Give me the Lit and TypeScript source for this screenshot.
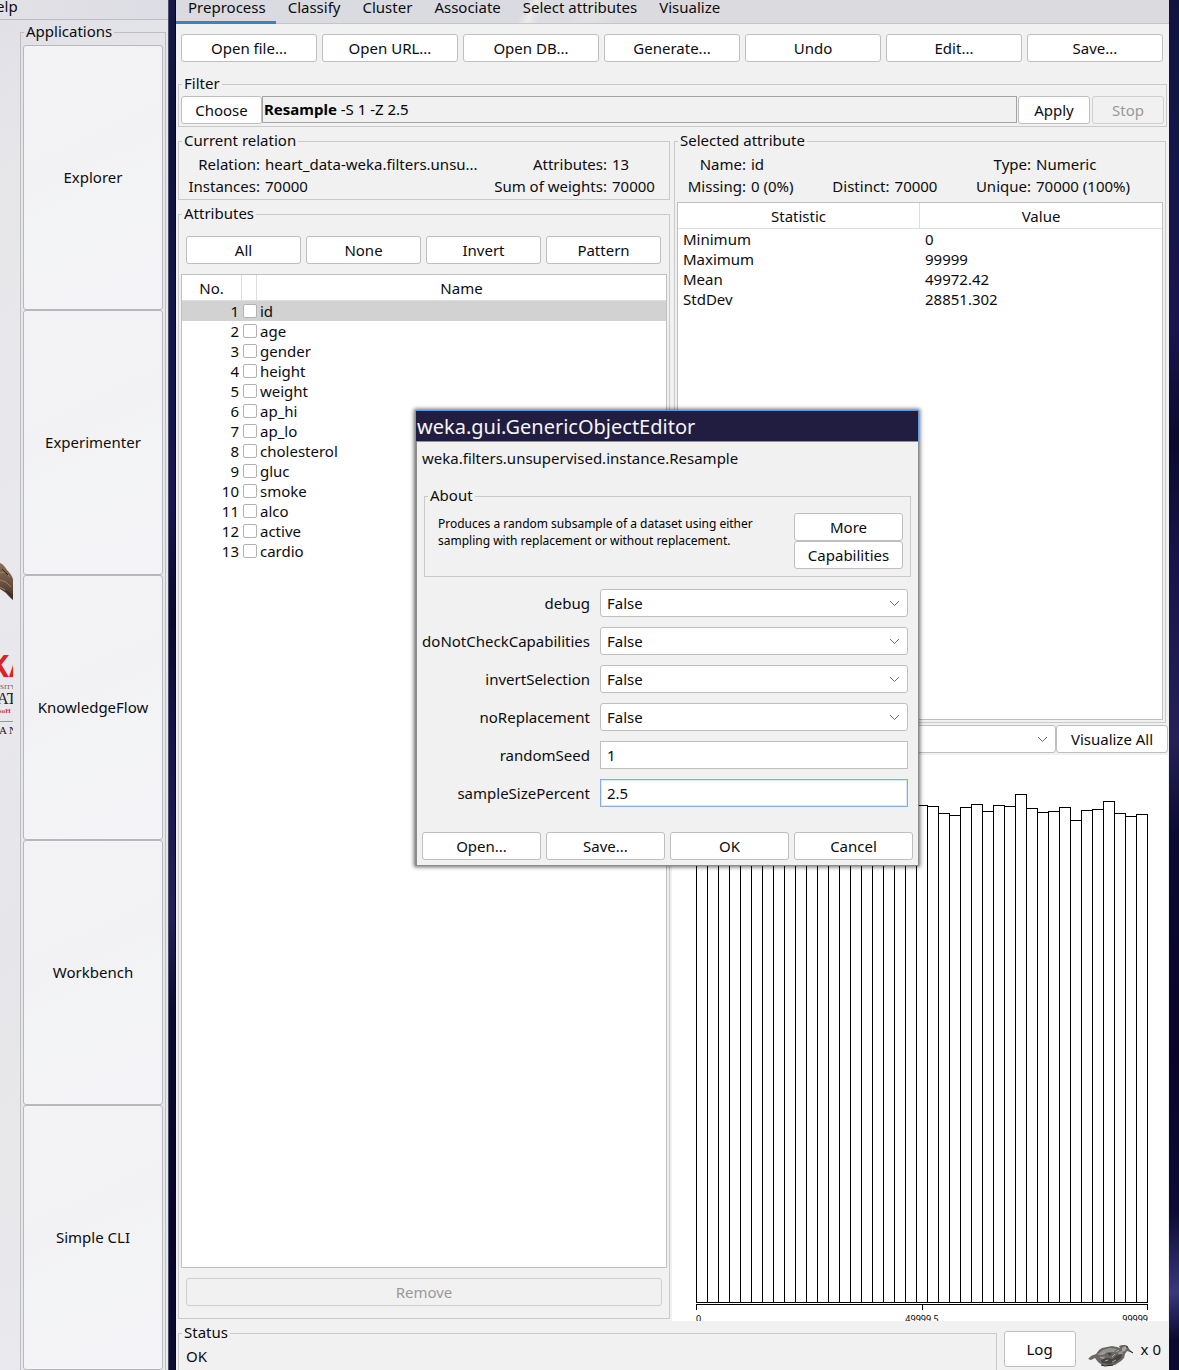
import { LitElement, html, css } from "lit";
import { customElement, property } from "lit/decorators.js";

const controls = css`
  *,
  *::before,
  *::after {
    box-sizing: border-box;
  }
  button,
  input,
  select {
    font: inherit;
    color: inherit;
    margin: 0;
    outline: none;
  }
  .btn {
    height: 28px;
    min-width: 0;
    padding: 0 4px;
    border: 1px solid #bfbfbf;
    border-radius: 3px;
    background: #fff;
    text-align: center;
    white-space: nowrap;
    line-height: 20px;
  }
  .btn:disabled {
    background: #f1f1f1;
    border-color: #cfcfcf;
    color: #999;
  }
  .group {
    margin: 0;
    padding: 0;
    min-width: 0;
    border: 1px solid #cacaca;
  }
  .group > legend {
    margin-left: 3px;
    padding: 0 2px;
    height: 20px;
    line-height: 18px;
  }
  .combo {
    display: grid;
    align-items: center;
    min-width: 0;
  }
  .combo > select {
    grid-area: 1 / 1;
    appearance: none;
    width: 100%;
    height: 28px;
    padding: 0 24px 0 6px;
    border: 1px solid #bfbfbf;
    border-radius: 3px;
    background: #fff;
  }
  .combo > svg {
    grid-area: 1 / 1;
    justify-self: end;
    width: 11px;
    height: 7px;
    margin-right: 8px;
    pointer-events: none;
    fill: none;
    stroke: #6c6c70;
  }
`;

const chevron = html`<svg viewBox="0 0 11 7" aria-hidden="true"><path d="M1 1 5.5 5.5 10 1" /></svg>`;

@customElement("gui-chooser")
class GuiChooser extends LitElement {
  static styles = [
    controls,
    css`
      :host {
        display: flex;
        flex-direction: column;
        overflow: hidden;
        background: linear-gradient(160deg, #dfdfe6 0, #e7e7ea 12%, #e9e9ed 40%, #e6e6eb 60%, #e8e8ea 80%, #e9e9ef 100%);
        border-right: 1px solid #4a4f68;
      }
      .menubar {
        display: flex;
        height: 20px;
        border-bottom: 1px solid #bcbcc6;
        background: linear-gradient(90deg, #e2e2e6, #dcdce4);
      }
      .menu {
        margin-left: -15px;
        padding: 0;
        border: 0;
        background: none;
        line-height: 20px;
        margin-top: -8px;
      }
      .main {
        flex: 1;
        display: flex;
        gap: 7px;
        padding: 2px 2px 0 0;
      }
      .logo {
        width: 13px;
        height: 180px;
        flex: none;
        align-self: flex-start;
        margin-top: 538px;
      }
      .apps {
        flex: 1;
        display: flex;
        flex-direction: column;
        padding: 3px 2px 0;
        border-color: #bdbdc2;
        border-bottom: 0;
      }
      .app {
        flex: 1;
        border: 1px solid #b8b8bc;
        border-radius: 3px;
        padding: 0 0 2px;
        background: linear-gradient(155deg, #f3f3f6 0, #f2f2f5 45%, #f3f4f5 60%, #f4f3f8 100%);
      }
      .apps > legend {
        margin-left: 1px;
      }
    `,
  ];

  render() {
    const apps = ["Explorer", "Experimenter", "KnowledgeFlow", "Workbench", "Simple CLI"];
    return html`
      <div class="menubar"><button class="menu">Help</button></div>
      <div class="main">
        <svg class="logo" viewBox="0 0 13 180" role="img" aria-label="WEKA">
          <defs>
            <linearGradient id="fur" x1="0" y1="0" x2="0" y2="1">
              <stop offset="0" stop-color="#8a6f57" />
              <stop offset=".55" stop-color="#6b5040" />
              <stop offset="1" stop-color="#3c2c24" />
            </linearGradient>
          </defs>
          <path d="M0 3C3 4 5 7 7 10 10 13 12 16 13 19V40C10 38 8 35 6 33L0 29Z" fill="url(#fur)" />
          <path d="M0 13 5 12 10 17M0 20 6 22 11 27M0 27 5 30" fill="none" stroke="#98806a" stroke-width="1" />
          <path d="M2 9 8 15M6 31 13 36" stroke="#33251e" stroke-width="1" />
          <text x="-11" y="117" fill="#dc2127" font-family="Open Sans" font-weight="700" font-size="30">KA</text>
          <text x="0" y="129" fill="#555" font-family="Liberation Serif" font-size="7">SITY</text>
          <text x="-3" y="144" fill="#222" font-family="Liberation Serif" font-size="16">AT</text>
          <text x="-1" y="153" fill="#d0384a" font-family="Liberation Serif" font-weight="700" font-size="7">soH</text>
          <path d="M0 161.500H13" stroke="#999" />
          <text x="-1" y="174" fill="#222" font-family="Liberation Serif" font-size="11">A N</text>
        </svg>
        <fieldset class="group apps">
          <legend>Applications</legend>
          ${apps.map((a) => html`<button class="app">${a}</button>`)}
        </fieldset>
      </div>
    `;
  }
}

@customElement("attribute-histogram")
class AttributeHistogram extends LitElement {
  @property({ attribute: false }) bars: number[] = [];

  static styles = css`
    * {
      box-sizing: border-box;
    }
    :host {
      display: flex;
      flex-direction: column;
      box-sizing: border-box;
      padding: 39px 20px 0 24px;
      background: #fff;
      overflow: hidden;
    }
    .plot {
      flex: 1;
      display: flex;
      align-items: flex-end;
      padding-left: 1px;
    }
    .bar {
      flex: 1 1 0;
      margin-left: -1px;
      border: 1px solid #000;
      background: #fff;
    }
    .axis {
      display: flex;
      height: 6px;
      margin-top: 1px;
      border: 1px solid #000;
      border-bottom: 0;
    }
    .half {
      flex: 1;
    }
    .half + .half {
      border-left: 1px solid #000;
    }
    .ticks {
      display: grid;
      grid-template-columns: 1fr auto 1fr;
      height: 11px;
      padding-top: 3px;
      font-size: 9px;
      line-height: 12px;
      color: #000;
      overflow: hidden;
    }
    .max {
      text-align: right;
    }
  `;

  render() {
    const max = Math.max(...this.bars);
    return html`
      <div class="plot">
        ${this.bars.map((b) => html`<div class="bar" style="height:${(b / max) * 100}%"></div>`)}
      </div>
      <div class="axis"><span class="half"></span><span class="half"></span></div>
      <div class="ticks"><span>0</span><span>49999.5</span><span class="max">99999</span></div>
    `;
  }
}

@customElement("weka-explorer")
class WekaExplorer extends LitElement {
  static styles = [
    controls,
    css`
      :host {
        display: flex;
        flex-direction: column;
        background: #f1f1f1;
        border-left: 1px solid #05051c;
        min-width: 0;
      }
      .tabs {
        display: flex;
        height: 24px;
        border-bottom: 1px solid #c6c6c6;
        background: linear-gradient(115deg, #dadae1 0 35%, #ececec 36%, #dcdce2 37% 40%, #e2e2e4 42%, #dadadf 45% 100%);
      }
      .tab {
        height: 24px;
        padding: 0 10px 7px 12px;
        border: 0;
        border-bottom: 3px solid transparent;
        background: none;
        line-height: 14px;
      }
      .tab.active {
        border-color: #3f7fc4;
      }
      .toolbar {
        display: grid;
        grid-template-columns: repeat(7, 1fr);
        gap: 5px;
        padding: 10px 6px 12px 5px;
      }
      .filter {
        display: flex;
        margin: 0 2px 4px;
        padding: 2px;
      }
      .filter > legend,
      .attributes > legend,
      .selection > legend {
        margin-left: 1px;
      }
      .choose {
        width: 81px;
      }
      .spec {
        flex: 1;
        height: 27px;
        padding: 0 1px;
        margin-right: 1px;
        border: 1px solid #a4a4a4;
        line-height: 24px;
        color: #000;
      }
      .apply,
      .stop {
        width: 72px;
      }
      .stop {
        margin-left: 2px;
      }
      .columns {
        flex: 1;
        display: grid;
        grid-template-columns: 492fr 496fr;
        gap: 2px;
        padding: 0 1px 0 2px;
      }
      .left {
        display: flex;
        flex-direction: column;
        min-width: 0;
        gap: 4px;
        padding-bottom: 2px;
      }
      .right {
        display: grid;
        grid-template-rows: 592fr 28px 566fr;
        min-width: 0;
        gap: 2px;
      }
      .facts {
        display: grid;
        grid-auto-rows: 22px;
        column-gap: 5px;
        line-height: 20px;
        margin: 0;
        padding-top: 3px;
        white-space: nowrap;
      }
      .facts dt {
        text-align: right;
      }
      .facts dd {
        margin: 0;
      }
      .relation {
        grid-template-columns: 81px 1fr auto 57px;
        padding-bottom: 1px;
      }
      .selected {
        grid-template-columns: 71px 1fr auto 1fr auto 129px;
        padding-bottom: 4px;
      }
      .attributes {
        flex: 1;
        display: flex;
        flex-direction: column;
        gap: 10px;
        padding: 12px 2px;
      }
      .picks {
        display: grid;
        grid-template-columns: repeat(4, 1fr);
        gap: 5px;
        padding: 0 6px 0 5px;
      }
      .remove {
        margin: 0 5px;
      }
      .sheet {
        flex: 1;
        border: 1px solid #bfbfbf;
        background: #fff;
      }
      table {
        width: 100%;
        border-collapse: separate;
        border-spacing: 0;
        table-layout: fixed;
      }
      th {
        height: 26px;
        padding: 0;
        border-bottom: 1px solid #dedede;
        border-right: 1px solid #dedede;
        font-weight: 400;
        line-height: 20px;
      }
      th:last-child {
        border-right: 0;
      }
      td {
        height: 20px;
        padding: 0;
        line-height: 20px;
      }
      .num {
        width: 60px;
      }
      td.num {
        padding-right: 3px;
        text-align: right;
      }
      .tick {
        width: 15px;
      }
      td.name {
        padding-left: 3px;
      }
      .box {
        display: block;
        appearance: none;
        width: 14px;
        height: 14px;
        margin-left: 1px;
        border: 1px solid #b2b2b2;
        border-radius: 2px;
        background: #fff;
      }
      .current td {
        background: #d2d2d2;
      }
      .stats td {
        padding-left: 5px;
      }
      .selection {
        display: flex;
        flex-direction: column;
        margin: 0 2px;
        padding: 0 2px 2px;
      }
      .selection .facts {
        margin: 0 -2px;
      }
      .viz {
        display: grid;
        grid-template-columns: 1fr 112px;
        padding-left: 2px;
      }
      .footer {
        display: flex;
        align-items: flex-start;
        padding: 2px 8px 0 2px;
      }
      .status {
        flex: 1;
        padding: 3px 7px 4px;
        border-bottom: 0;
        line-height: 20px;
      }
      .status > legend {
        margin-left: -4px;
      }
      .log {
        width: 72px;
        height: 36px;
        margin: 8px 12px 0 7px;
      }
      .bird {
        width: 46px;
        height: 22px;
        margin: 22px 7px 0 0;
      }
      .count {
        margin-top: 16px;
        line-height: 20px;
      }
    `,
  ];

  private attrs = "id age gender height weight ap_hi ap_lo cholesterol gluc smoke alco active cardio".split(" ");
  private stats = [
    ["Minimum", "0"],
    ["Maximum", "99999"],
    ["Mean", "49972.42"],
    ["StdDev", "28851.302"],
  ];
  private counts = [
    498, 495, 497, 492, 499, 496, 493, 498, 500, 494, 497, 495, 491, 498, 496, 494, 499, 497, 493, 496, 498, 497, 490,
    488, 496, 499, 492, 498, 497, 509, 495, 491, 492, 496, 483, 493, 494, 502, 490, 487, 489,
  ];

  render() {
    const tabs = ["Preprocess", "Classify", "Cluster", "Associate", "Select attributes", "Visualize"];
    const tools = ["Open file...", "Open URL...", "Open DB...", "Generate...", "Undo", "Edit...", "Save..."];
    return html`
      <nav class="tabs" role="tablist">
        ${tabs.map(
          (t, i) => html`<button role="tab" aria-selected=${i === 0} class="tab ${i ? "" : "active"}">${t}</button>`
        )}
      </nav>
      <div class="toolbar">${tools.map((t) => html`<button class="btn">${t}</button>`)}</div>
      <fieldset class="group filter">
        <legend>Filter</legend>
        <button class="btn choose">Choose</button>
        <div class="spec"><b>Resample</b> -S 1 -Z 2.5</div>
        <button class="btn apply">Apply</button>
        <button class="btn stop" disabled>Stop</button>
      </fieldset>
      <div class="columns">
        <div class="left">
          <fieldset class="group">
            <legend>Current relation</legend>
            <dl class="facts relation">
              <dt>Relation:</dt>
              <dd>heart_data-weka.filters.unsu...</dd>
              <dt>Attributes:</dt>
              <dd>13</dd>
              <dt>Instances:</dt>
              <dd>70000</dd>
              <dt>Sum of weights:</dt>
              <dd>70000</dd>
            </dl>
          </fieldset>
          <fieldset class="group attributes">
            <legend>Attributes</legend>
            <div class="picks">
              ${["All", "None", "Invert", "Pattern"].map((t) => html`<button class="btn">${t}</button>`)}
            </div>
            <div class="sheet">
              <table>
                <thead>
                  <tr>
                    <th class="num">No.</th>
                    <th class="tick"></th>
                    <th>Name</th>
                  </tr>
                </thead>
                <tbody>
                  ${this.attrs.map(
                    (a, i) => html`<tr class=${i ? "" : "current"}>
                      <td class="num">${i + 1}</td>
                      <td><input class="box" type="checkbox" id="attr-${i}" /></td>
                      <td class="name"><label for="attr-${i}">${a}</label></td>
                    </tr>`
                  )}
                </tbody>
              </table>
            </div>
            <button class="btn remove" disabled>Remove</button>
          </fieldset>
        </div>
        <div class="right">
          <fieldset class="group selection">
            <legend>Selected attribute</legend>
            <dl class="facts selected">
              <dt>Name:</dt>
              <dd>id</dd>
              <dt></dt>
              <dd></dd>
              <dt>Type:</dt>
              <dd>Numeric</dd>
              <dt>Missing:</dt>
              <dd>0 (0%)</dd>
              <dt>Distinct:</dt>
              <dd>70000</dd>
              <dt>Unique:</dt>
              <dd>70000 (100%)</dd>
            </dl>
            <div class="sheet">
              <table class="stats">
                <thead>
                  <tr>
                    <th>Statistic</th>
                    <th>Value</th>
                  </tr>
                </thead>
                <tbody>
                  ${this.stats.map(([k, v]) => html`<tr><td>${k}</td><td>${v}</td></tr>`)}
                </tbody>
              </table>
            </div>
          </fieldset>
          <div class="viz">
            <div class="combo"><select aria-label="Class"></select>${chevron}</div>
            <button class="btn">Visualize All</button>
          </div>
          <attribute-histogram .bars=${this.counts}></attribute-histogram>
        </div>
      </div>
      <div class="footer">
        <fieldset class="group status">
          <legend>Status</legend>
          OK
        </fieldset>
        <button class="btn log">Log</button>
        <svg class="bird" viewBox="0 0 46 22" aria-hidden="true">
          <path
            d="M0 14 3 11 8 9 11 5 14 3 19 2 24 1 29 2 32 3 31 1 34 0 38 0 40 2 42 5 45 8 42 7 39 6 37 9 36 13 33 16 30 18 27 20 21 21 14 20 10 17 7 13 3 15Z"
            fill="#6a6764"
          />
          <path d="M9 10 15 5 22 3 29 4 26 7 20 7 14 10ZM30 7 34 6 35 9 31 10ZM12 13 17 11 16 14Z" fill="#96928e" />
          <path d="M13 15 19 13 25 14 29 10 34 9 33 13 28 17 21 19 14 18ZM19 8 24 8 22 11Z" fill="#454341" />
          <path d="M34 3 38 1 39 3 37 6 34 7Z" fill="#aaa6a2" />
          <path d="M14 9 17 8M24 12 27 9M17 16 20 15M24 17 28 15M12 12 15 13M28 7 31 5" stroke="#b0aca8" />
          <path d="M38 2H40M13 20 17 21 25 20M42 6 45 8" fill="none" stroke="#1c1a19" />
        </svg>
        <span class="count">x 0</span>
      </div>
    `;
  }
}

@customElement("object-editor")
class ObjectEditor extends LitElement {
  static styles = [
    controls,
    css`
      :host {
        display: block;
        box-sizing: border-box;
        background: #f1f1f1;
        border: solid #8a8d90;
        border-width: 0 1px 1px 2px;
        box-shadow: 0 0 4px 1px rgba(0, 0, 0, 0.6);
      }
      .title {
        margin: 0 -1px 0 -2px;
        padding: 0 1px;
        height: 32px;
        border: 1px solid #5b9be6;
        background: #211d40;
        color: #f6f6fa;
        font-size: 20px;
        font-weight: 400;
        line-height: 32px;
        white-space: nowrap;
      }
      .body {
        padding: 6px 5px 5px;
      }
      .class {
        line-height: 20px;
      }
      .about {
        display: flex;
        justify-content: space-between;
        margin: 18px 2px 12px;
        padding: 7px 7px 7px 13px;
      }
      .about > legend {
        margin-left: -10px;
      }
      .text {
        margin: 0;
        padding-top: 2px;
        font-size: 12px;
        line-height: 17px;
        color: #000;
        white-space: nowrap;
      }
      .side {
        display: flex;
        flex-direction: column;
        width: 109px;
      }
      .form {
        display: grid;
        grid-template-columns: minmax(0, 1fr) 308px;
        gap: 10px;
        align-items: center;
        padding-right: 5px;
      }
      .form > label {
        justify-self: end;
      }
      .field {
        height: 28px;
        min-width: 0;
        padding: 0 6px;
        border: 1px solid #bfbfbf;
        background: #fff;
      }
      .focus {
        border-color: #86addb;
        box-shadow: inset 0 0 0 1px #d9e7f7;
      }
      .actions {
        display: grid;
        grid-template-columns: repeat(4, 1fr);
        gap: 5px;
        margin-top: 25px;
      }
    `,
  ];

  render() {
    const flags = ["debug", "doNotCheckCapabilities", "invertSelection", "noReplacement"];
    return html`
      <h1 class="title">weka.gui.GenericObjectEditor</h1>
      <div class="body">
        <div class="class">weka.filters.unsupervised.instance.Resample</div>
        <fieldset class="group about">
          <legend>About</legend>
          <p class="text">Produces a random subsample of a dataset using either<br />sampling with replacement or without replacement.</p>
          <div class="side">
            <button class="btn">More</button>
            <button class="btn">Capabilities</button>
          </div>
        </fieldset>
        <div class="form">
          ${flags.map(
            (f) => html`<label for=${f}>${f}</label>
              <div class="combo">
                <select id=${f}><option>False</option><option>True</option></select>${chevron}
              </div>`
          )}
          <label for="randomSeed">randomSeed</label>
          <input class="field" id="randomSeed" value="1" />
          <label for="sampleSizePercent">sampleSizePercent</label>
          <input class="field focus" id="sampleSizePercent" value="2.5" />
        </div>
        <div class="actions">
          ${["Open...", "Save...", "OK", "Cancel"].map((t) => html`<button class="btn">${t}</button>`)}
        </div>
      </div>
    `;
  }
}

@customElement("app-root")
class AppRoot extends LitElement {
  static styles = css`
    :host {
      display: grid;
      grid-template-columns: 169px 1fr;
      column-gap: 6px;
      padding-right: 10px;
      position: relative;
      min-height: 100vh;
      box-sizing: border-box;
      font: 15px "Noto Sans", sans-serif;
      color: #0c0c0e;
      background: linear-gradient(
        170deg,
        #191a4a 0,
        #10113c 10%,
        #14164a 22%,
        #1a1450 34%,
        #0a0a2c 41%,
        #17134a 48%,
        #242158 60%,
        #0b0a30 66%,
        #0a0428 80%,
        #0c0c34 90%,
        #3a377c 95%,
        #0a0a30 98%
      );
    }
    .editor {
      position: absolute;
      left: 415px;
      top: 410px;
      width: 504px;
    }
  `;

  render() {
    return html`
      <gui-chooser></gui-chooser>
      <weka-explorer></weka-explorer>
      <object-editor class="editor" role="dialog"></object-editor>
    `;
  }
}
